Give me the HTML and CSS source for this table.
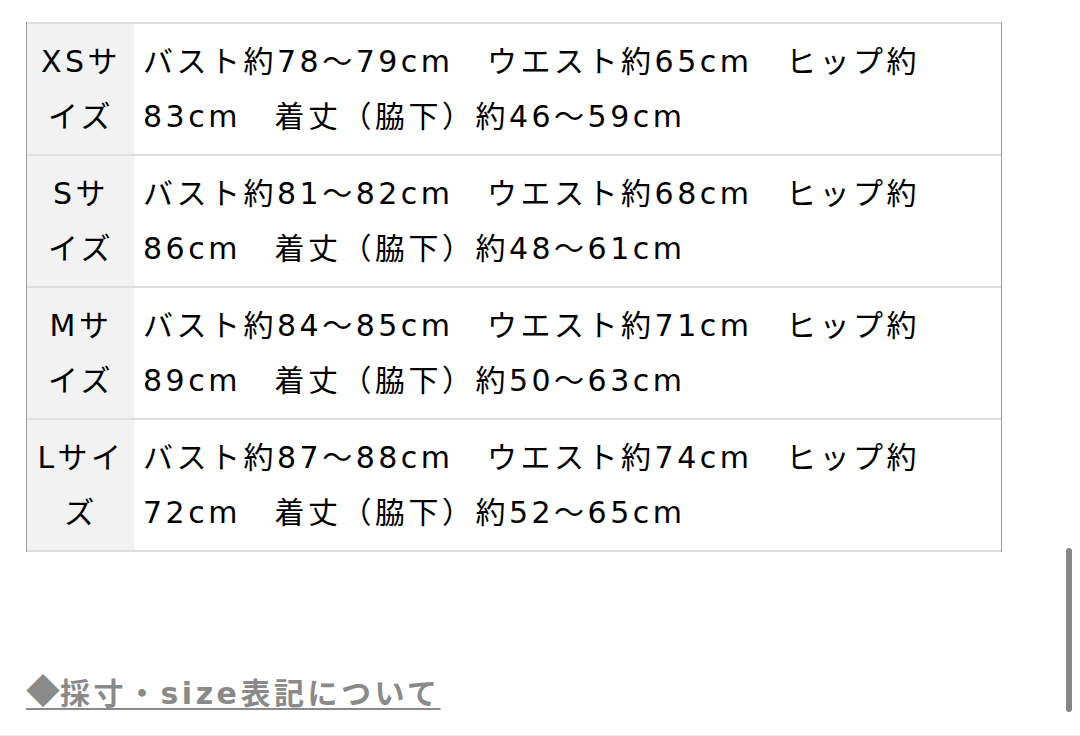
FILE: index.html
```html
<!DOCTYPE html>
<html lang="ja">
<head>
<meta charset="utf-8">
<title>サイズ表</title>
<link rel="stylesheet" href="styles.css">
</head>
<body>
<div class="page">
  <div class="content">
    <table class="size-table">
      <tbody>
        <tr>
          <th>XSサイズ</th>
          <td>バスト約78〜79cm　ウエスト約65cm　ヒップ約83cm　着丈（脇下）約46〜59cm</td>
        </tr>
        <tr>
          <th>Sサイズ</th>
          <td>バスト約81〜82cm　ウエスト約68cm　ヒップ約86cm　着丈（脇下）約48〜61cm</td>
        </tr>
        <tr>
          <th>Mサイズ</th>
          <td>バスト約84〜85cm　ウエスト約71cm　ヒップ約89cm　着丈（脇下）約50〜63cm</td>
        </tr>
        <tr>
          <th>Lサイズ</th>
          <td>バスト約87〜88cm　ウエスト約74cm　ヒップ約72cm　着丈（脇下）約52〜65cm</td>
        </tr>
      </tbody>
    </table>
    <p class="size-link"><a href="#"><span class="mark">◆</span>採寸・size表記について</a></p>
  </div>
  <div class="bottom-line"></div>
  <div class="scroll-indicator"></div>
</div>
</body>
</html>
```
FILE: styles.css
```css
html, body {
  margin: 0;
  padding: 0;
  background: #ffffff;
}

body {
  font-family: "DejaVu Sans", "Noto Sans CJK JP", sans-serif;
  color: #000;
}

.page {
  position: relative;
  height: 736px;
  display: flex;
  flex-direction: column;
  overflow: hidden;
}

.content {
  flex: 1;
  padding: 22px 0 0 26px;
}

.size-table {
  width: 976px;
  border-collapse: separate;
  border-spacing: 0;
  border-left: 1px solid #9a9a9a;
  border-right: 1px solid #9a9a9a;
  font-size: 30px;
  line-height: 55px;
  letter-spacing: 3.5px;
}

.size-table th,
.size-table td {
  border-top: 2px solid #dedede;
  vertical-align: middle;
  font-weight: 400;
}

.size-table tr:last-child th,
.size-table tr:last-child td {
  border-bottom: 2px solid #dedede;
}

.size-table th {
  width: 88px;
  padding: 10px 9px 10px 10px;
  background: #f2f2f2;
  text-align: center;
}

.size-table td {
  padding: 10px 40px 10px 9px;
  text-align: left;
}

.size-link {
  margin: 110px 0 0 0;
  font-size: 30px;
  line-height: 55px;
  font-weight: 700;
  letter-spacing: 3.5px;
}

.size-link a {
  color: #8a8a8a;
  text-decoration: underline;
  text-decoration-thickness: 2px;
  text-underline-offset: 4px;
}

.size-link .mark {
  font-family: "Noto Sans CJK JP", sans-serif;
  font-size: 34px;
  letter-spacing: 0;
}

.bottom-line {
  height: 1px;
  background: #e6e6e6;
}

.scroll-indicator {
  position: absolute;
  left: 1066px;
  top: 548px;
  width: 6px;
  height: 164px;
  border-radius: 3px;
  background: #858585;
}
```
